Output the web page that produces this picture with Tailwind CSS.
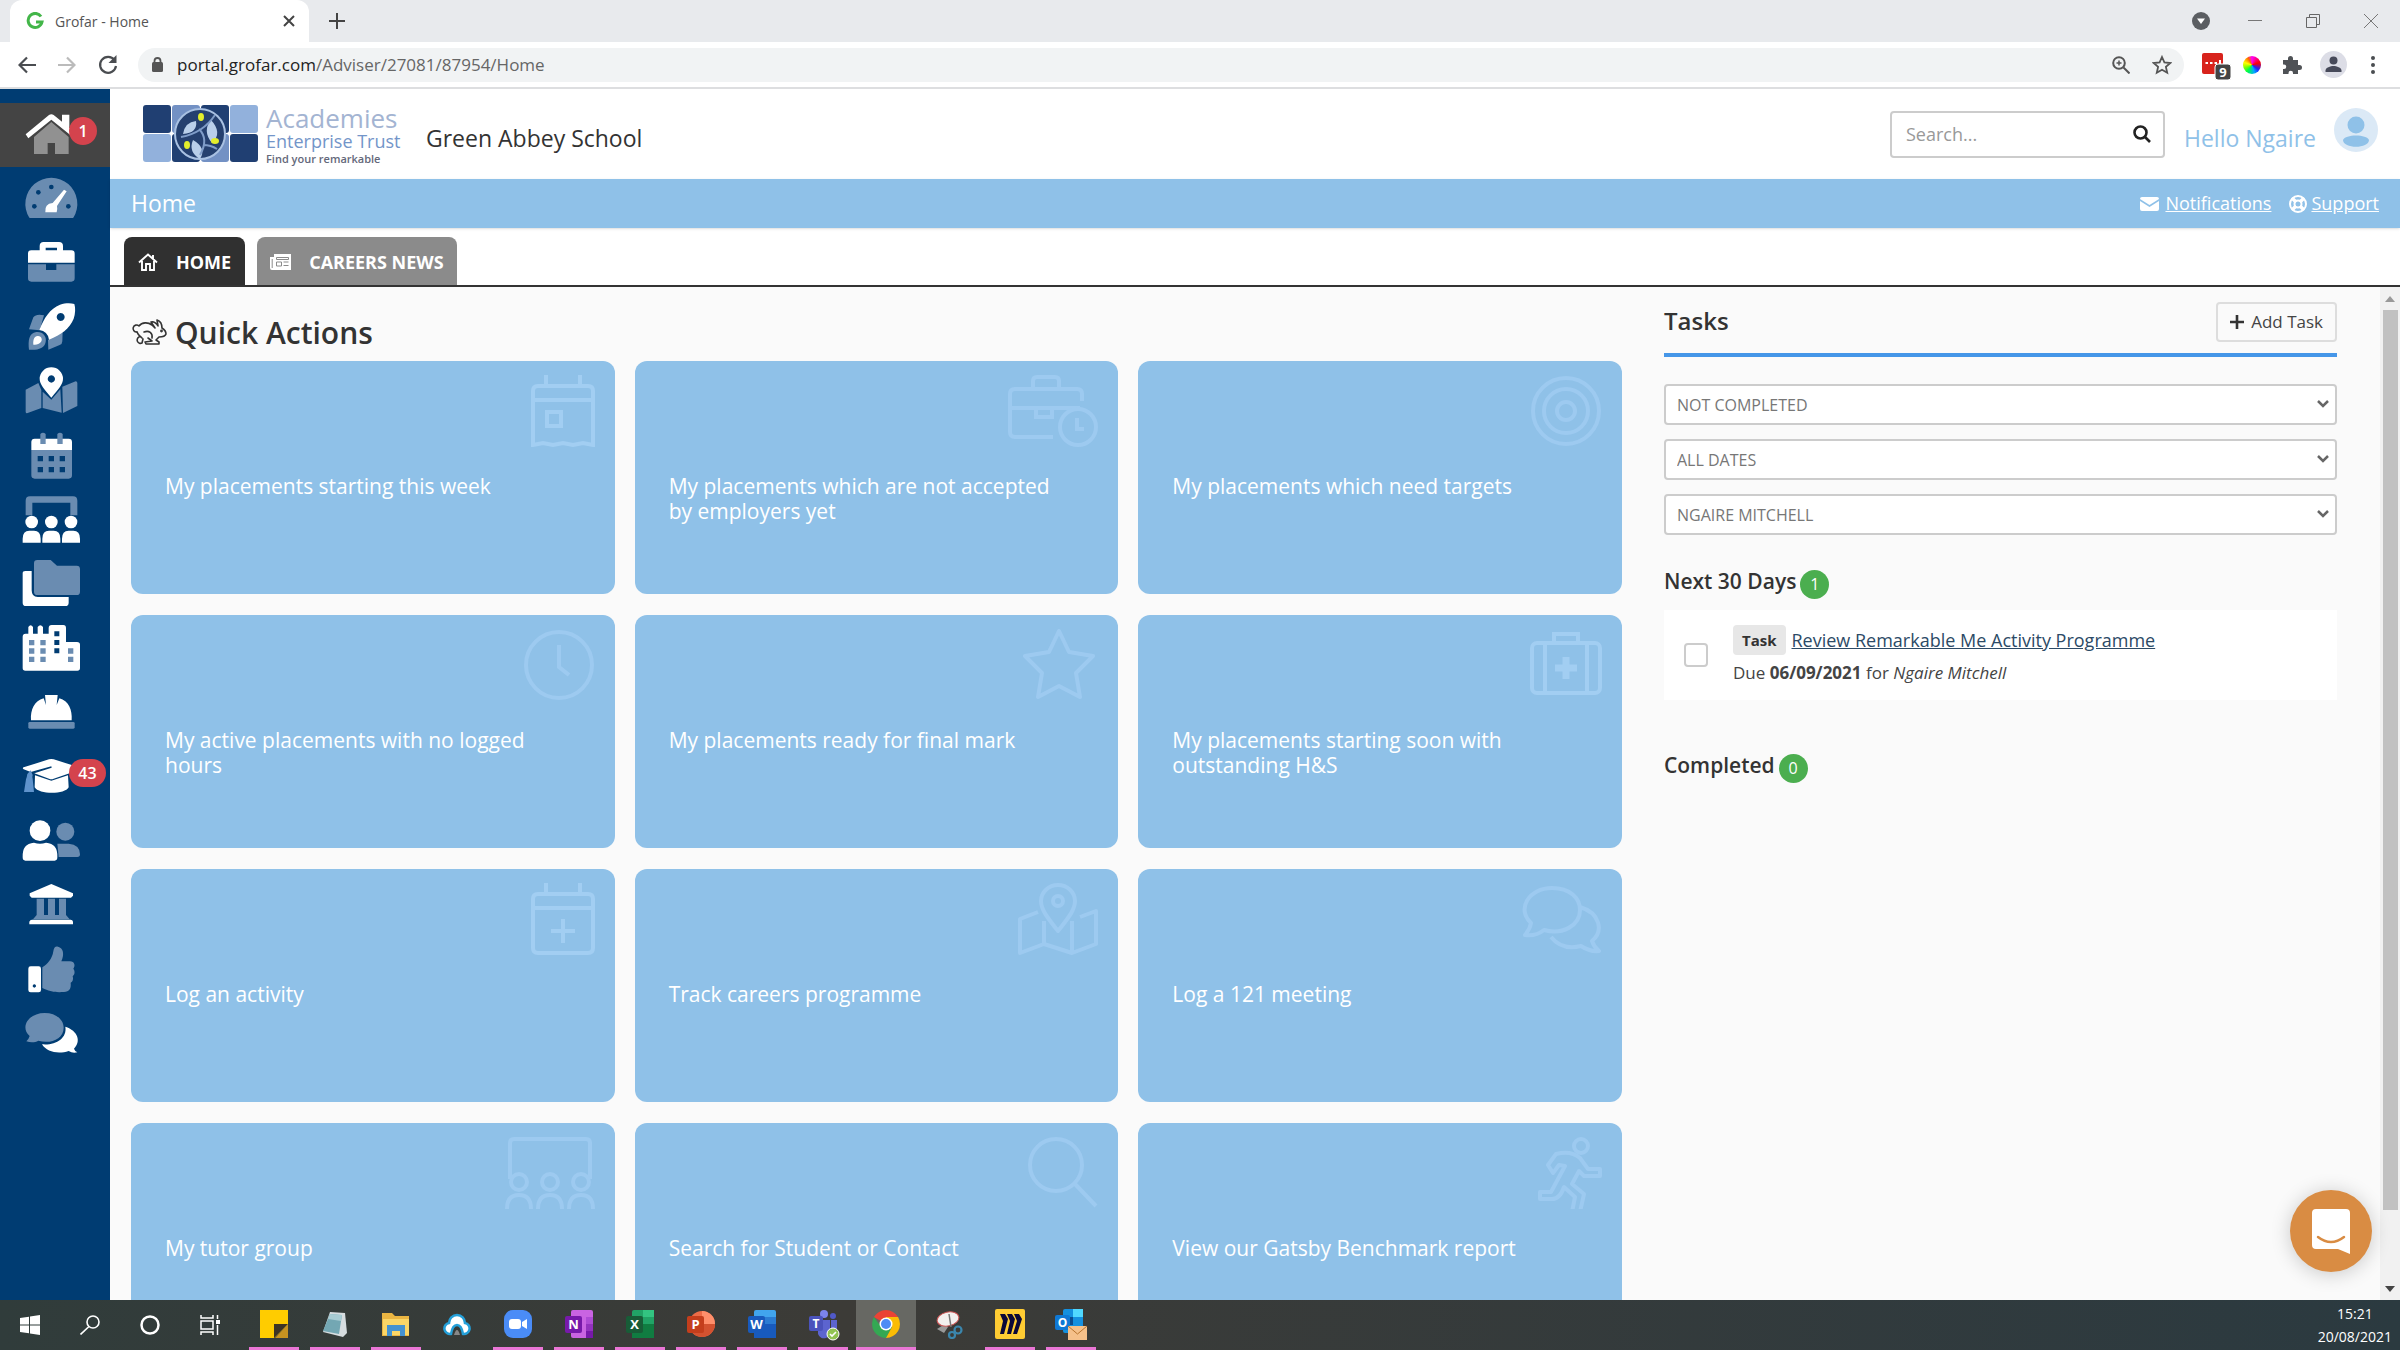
<!DOCTYPE html>
<html lang="en">
<head>
<meta charset="utf-8">
<title>Grofar - Home</title>
<script src="https://cdn.jsdelivr.net/npm/@tailwindcss/browser@4"></script>
</head>
<body class="flex h-screen flex-col overflow-hidden bg-white font-['Open_Sans',sans-serif] text-[#333]">

<!-- Browser chrome -->
<div class="flex h-[42px] shrink-0 items-stretch bg-[#e8eaed] pl-[10px]">
  <div class="flex w-[299px] items-center rounded-t-xl bg-white pr-3 pl-4">
    <svg class="size-[18px]" viewBox="0 0 18 18" fill="none" stroke="#43b649" stroke-width="3"><path d="M15 4.5A7 7 0 1 0 16 10H10"/></svg>
    <span class="ml-[11px] flex-1 text-[14px] text-[#555]">Grofar - Home</span>
    <button aria-label="Close tab" class="size-4"><svg viewBox="0 0 16 16" stroke="#444" stroke-width="2"><path d="M3 3l10 10M13 3L3 13"/></svg></button>
  </div>
  <button aria-label="New tab" class="ml-5 w-4"><svg viewBox="0 0 16 16" stroke="#444" stroke-width="2"><path d="M8 0v16M0 8h16"/></svg></button>
  <div class="ml-auto flex items-center gap-[38px] pr-[22px]">
    <svg class="size-[18px]" viewBox="0 0 18 18"><circle cx="9" cy="9" r="9" fill="#5b5e62"/><path d="M5 6.500h8L9 12z" fill="#fff"/></svg>
    <button aria-label="Minimise" class="w-[14px]"><svg viewBox="0 0 14 14" stroke="#777"><path d="M0 6.500h14"/></svg></button>
    <button aria-label="Restore" class="ml-[6px] w-[14px]"><svg viewBox="0 0 14 14" fill="none" stroke="#666"><path d="M.5 3.500h10v10h-10zM3.500 3.500v-3h10v10h-3"/></svg></button>
    <button aria-label="Close" class="ml-[6px] w-[14px]"><svg viewBox="0 0 14 14" stroke="#777"><path d="M0 0l14 14M14 0L0 14"/></svg></button>
  </div>
</div>
<div class="flex h-[47px] shrink-0 items-center border-b-2 border-[#dddee0] bg-white pr-[25px] pl-[18px]">
  <button aria-label="Back" class="w-[18px]"><svg viewBox="0 0 18 18" fill="none" stroke="#4a4d51" stroke-width="2.200"><path d="M18 9H1.500M9 1.500L1.500 9 9 16.500"/></svg></button>
  <button aria-label="Forward" class="ml-[22px] w-[18px]"><svg viewBox="0 0 18 18" fill="none" stroke="#bbb" stroke-width="2.200"><path d="M0 9h16.500M9 1.500L16.500 9 9 16.500"/></svg></button>
  <button aria-label="Reload" class="ml-[22px] w-[20px]"><svg viewBox="0 0 20 20" fill="none" stroke="#4a4d51" stroke-width="2.200"><path d="M16.500 5A8 8 0 1 0 18 11"/><path d="M18.500 0v8h-8z" fill="#4a4d51" stroke="none"/></svg></button>
  <div class="ml-5 flex h-[34px] flex-1 items-center rounded-full bg-[#f1f3f4] pr-3 pl-[14px]">
    <svg class="w-[11px]" viewBox="0 0 11 15"><rect y="5" width="11" height="10" rx="1.500" fill="#555"/><path d="M2.500 6V4a3 3 0 0 1 6 0v2" fill="none" stroke="#555" stroke-width="1.800"/></svg>
    <span class="ml-[14px] flex-1 text-[17px] text-[#666]"><span class="text-[#222]">portal.grofar.com</span>/Adviser/27081/87954/Home</span>
    <svg class="size-[18px]" viewBox="0 0 18 18" fill="none" stroke="#555" stroke-width="2"><circle cx="7" cy="7" r="5.800"/><path d="M11.500 11.500l6 6"/><path d="M7 4.500v5M4.500 7h5" stroke-width="1.500"/></svg>
    <svg class="ml-[22px] size-[20px]" viewBox="0 0 20 20" fill="none" stroke="#555" stroke-width="1.800"><path d="M10 2l2.400 5.400 5.900.6-4.400 3.900 1.300 5.800L10 14.700l-5.200 3 1.300-5.800L1.700 8l5.900-.6z"/></svg>
  </div>
  <svg class="ml-[18px] h-[30px] w-[29px]" viewBox="0 0 29 30"><rect width="21" height="21" y="3" rx="2" fill="#d8231c"/><path d="M3.500 13h2.500M8 13h2.500M12.500 13H15M18 10v6" stroke="#fff" stroke-width="2"/><rect x="13" y="14" width="16" height="16" rx="3" fill="#444" stroke="#fff"/><text x="21" y="27" text-anchor="middle" font-size="13" font-weight="700" fill="#fff">9</text></svg>
  <span class="ml-3 size-[18px] rounded-full bg-[conic-gradient(#f0f,#f00_20%,#22f_35%,#0af_45%,#0f4_60%,#8f0_70%,#ff0_80%,#f60_92%,#f0f)]"></span>
  <svg class="ml-[21px] size-[20px]" viewBox="0 0 20 20" fill="#4f5256"><path d="M1 5h5V3.500a2.500 2.500 0 0 1 5 0V5h5v5h1.500a2.500 2.500 0 0 1 0 5H16v4h-5v-1a2 2 0 0 0-4.500 0v1H1v-5h1a2 2 0 0 0 0-4.500H1z"/></svg>
  <svg class="ml-[18px] size-[27px]" viewBox="0 0 27 27"><circle cx="13.500" cy="13.500" r="13.500" fill="#dcdde6"/><circle cx="13.500" cy="9.500" r="4" fill="#474a5a"/><path d="M5.500 21v-1.500c0-3 5-4.500 8-4.500s8 1.500 8 4.500V21z" fill="#474a5a"/></svg>
  <svg class="ml-6 h-[18px] w-1" viewBox="0 0 4 18" fill="#4a4d51"><circle cx="2" cy="2" r="2"/><circle cx="2" cy="9" r="2"/><circle cx="2" cy="16" r="2"/></svg>
</div>

<!-- Portal -->
<div class="flex min-h-0 flex-1">
  <nav class="flex w-[110px] shrink-0 flex-col bg-[#003c72] pt-[14px]">
    <a href="#" aria-label="Home" class="relative block h-16 bg-[#444]">
      <svg viewBox="0 39 330 192"><path d="M102 141l52-45 52 45v51H165v-33h-22v33h-41z" fill="#919191"/><path d="M77 133l70-58q7-5 14 0l25 20V74h22v39l24 20-9 12-69-56-69 56z" fill="#fff"/></svg>
      <span class="absolute top-[14px] left-[69px] flex size-7 items-center justify-center rounded-full bg-[#d4434d] text-[16px] font-semibold text-white">1</span>
    </a>
    <a href="#" aria-label="Dashboard" class="block h-16"><svg viewBox="0 231 330 192"><path d="M88 383a78 78 0 1 1 132 0q-2 1-5 1H93q-3 0-5-1z" fill="#6a8cb1"/><g fill="#003c72"><circle cx="154" cy="291" r="7"/><circle cx="115" cy="307" r="7"/><circle cx="103" cy="349" r="7"/><circle cx="205" cy="349" r="7"/></g><path d="M136 367q-3-26 22-28l34-40 8 5-29 44q2 9-1 19z" fill="#fff"/></svg></a>
    <a href="#" aria-label="Placements" class="block h-16"><svg viewBox="0 423 330 192"><path d="M84 518v-27q0-10 10-10h25v-13q0-12 12-12h46q12 0 12 12v13h25q10 0 10 10v27zM137 481h34v-8h-34z" fill="#fff" fill-rule="evenodd"/><path d="M84 523h54v17h31v-17h55v42q0 10-10 10H94q-10 0-10-10z" fill="#6a8cb1"/></svg></a>
    <a href="#" aria-label="Launch" class="block h-16"><svg viewBox="0 615 330 192"><path d="M132 676q-24-5-32 6l-13 36 32 3zM144 750l44-28-1 32q0 8-8 11l-34 14z" fill="#6a8cb1"/><path d="M118 720c14-36 32-64 62-76 16-5 32-5 43-2 4 12 3 30-2 44-12 30-38 48-74 63q-4-26-29-29zM182 669a12 12 0 1 0 .1 0z" fill="#fff" fill-rule="evenodd"/><path d="M87 779c-3-26-1-50 22-53 20-2 32 14 28 30-4 20-24 25-50 23z" fill="#6a8cb1"/><path d="M100 764c-1-16 3-27 14-26 12 1 14 13 8 19-5 6-12 8-22 7z" fill="#fff"/></svg></a>
    <a href="#" aria-label="Map" class="block h-16"><svg viewBox="0 807 330 192"><path d="M77 899l38-20 9 21v54l-43 16q-4 0-4-5zM128 905l26 24 27-31 4 70-57-14zM187 890l40-16q5 0 5 5v69l-43 21z" fill="#6a8cb1"/><path d="M154 923c-22-28-35-40-35-57a35 34 0 0 1 70 0c0 17-13 29-35 57zM154 856a11 11 0 1 0 .1 0z" fill="#fff" fill-rule="evenodd"/></svg></a>
    <a href="#" aria-label="Calendar" class="block h-16"><svg viewBox="0 999 330 192"><path d="M94 1080v-24q0-10 10-10h102q10 0 10 10v24z" fill="#fff"/><path d="M94 1080h122v76q0 10-10 10H104q-10 0-10-10zM113 1098v16h16v-16zm33 0v16h16v-16zm33 0v16h16v-16zM113 1131v16h16v-16zm33 0v16h16v-16zm33 0v16h16v-16z" fill="#6a8cb1" fill-rule="evenodd"/><path d="M121 1032q8-8 16 0v30h-16zM172 1032q8-8 16 0v30h-16z" fill="#6a8cb1"/></svg></a>
    <a href="#" aria-label="Groups" class="block h-16"><svg viewBox="0 1191 330 192"><path d="M77 1276v-44q0-13 13-13h129q13 0 13 13v44h-21v-38H97v38z" fill="#6a8cb1"/><g fill="#fff"><circle cx="95" cy="1296" r="19"/><circle cx="154" cy="1296" r="19"/><circle cx="213" cy="1296" r="19"/><path d="M68 1358v-12q0-24 20-24h14q20 0 20 24v12zM127 1358v-12q0-24 20-24h14q20 0 20 24v12zM186 1358v-12q0-24 20-24h14q20 0 20 24v12z"/></g></svg></a>
    <a href="#" aria-label="Folders" class="block h-16"><svg viewBox="0 -57 330 192"><path d="M68 10q0-7 8-7h19v58q0 20 18 20h93v17q0 10-10 10H78q-10 0-10-10z" fill="#fff"/><path d="M102-20q0-10 10-10h40l19 17h59q10 0 10 10v68q0 10-10 10H112q-10 0-10-10z" fill="#6a8cb1"/></svg></a>
    <a href="#" aria-label="Employers" class="block h-16"><svg viewBox="0 135 330 192"><path d="M68 200q0-9 9-9h8v-20q7-11 14 0v20h14v-20q8-11 16 0v20h17v-17q0-9 9-9h35q8 0 8 9v42h33q9 0 9 8v70q0 8-8 8H76q-8 0-8-8z" fill="#fff"/><path d="M87 210h16v16H87zm34 0h16v16h-16zM87 235h16v16H87zm34 0h16v16h-16zM87 260h16v16H87zm34 0h16v16h-16zM204 235h16v16h-16zm0 25h16v16h-16z" fill="#6a8cb1"/><path d="M163 184h15v15h-15zm0 26h15v15h-15zm0 25h15v15h-15z" fill="#003c72"/></svg></a>
    <a href="#" aria-label="Safety" class="block h-16"><svg viewBox="0 327 330 192"><path d="M93 451c-2-32 10-58 38-66l7 20-3-30h38l-3 30 8-20c28 8 39 34 37 66z" fill="#fff"/><rect x="85" y="456" width="139" height="20" rx="4" fill="#6a8cb1"/></svg></a>
    <a href="#" aria-label="Students" class="relative block h-16">
      <svg viewBox="0 519 330 192"><path d="M71 592l76-24q7-2 14 0l76 24q6 3 0 8l-76 26q-7 3-14 0l-44-16 52-17-1-4-62 17-21-8q-5-4 0-6z" fill="#fff"/><path d="M105 616l49 16 50-16 2 36c-10 22-90 22-102 0z" fill="#fff"/><path d="M82 612l10-11 6 14q-2 6 0 12l4 39H72l6-38q3-8 4-16z" fill="#5f93cc"/></svg>
      <span class="absolute top-[16px] left-[69px] flex h-7 w-[37px] items-center justify-center rounded-full bg-[#d4434d] text-[16px] font-semibold text-white">43</span>
    </a>
    <a href="#" aria-label="Contacts" class="block h-16"><svg viewBox="0 711 330 192"><circle cx="196" cy="785" r="27" fill="#6a8cb1"/><path d="M172 821h34q34 3 34 32 0 8-8 8h-56q-2-24-4-40z" fill="#6a8cb1"/><circle cx="120" cy="782" r="31" fill="#fff"/><path d="M68 862q-2-42 34-44 18 6 36 0 36 2 34 44 0 10-8 10H76q-8 0-8-10z" fill="#fff"/></svg></a>
    <a href="#" aria-label="Institutions" class="block h-16"><svg viewBox="0 903 330 192"><path d="M110 986h22v49h12v-49h21v49h12v-49h21v49l11 13H99l11-13z" fill="#6a8cb1"/><path d="M89 970l65-28 65 28v7l-6 6H95l-6-6zM88 1063v-8q2-6 8-6h116q6 0 7 6v8z" fill="#fff"/></svg></a>
    <a href="#" aria-label="Feedback" class="block h-16"><svg viewBox="0 1095 330 192"><path d="M85 1196q0-7 7-7h24q7 0 7 7v64q0 7-7 7H92q-7 0-7-7zM103 1243a5 5 0 1 0 .1 0z" fill="#fff" fill-rule="evenodd"/><path d="M127 1192c16-10 30-26 33-48 2-14 8-16 14-14 16 4 20 22 10 44h26c14 0 17 14 10 22 6 8 4 18-2 22 3 10 0 17-6 20 2 18-4 27-20 28-30 2-44-2-65-12z" fill="#6a8cb1"/></svg></a>
    <a href="#" aria-label="Messages" class="block h-16"><svg viewBox="0 1287 330 192"><path d="M196 1370c38 12 48 44 26 66q2 7 10 11-14 4-26-4c-30 10-66 4-80-20 40 4 76-18 70-53z" fill="#fff"/><path d="M134 1329c34 0 57 20 57 44 0 34-40 50-76 39-10 6-24 6-36 2q7-6 10-16c-30-26-4-69 45-69z" fill="#6a8cb1"/></svg></a>
  </nav>

  <div class="flex min-w-0 flex-1 flex-col">
    <header class="flex h-[90px] shrink-0 items-center pr-[22px] pl-[33px]">
      <svg class="h-[58px] w-[115px]" viewBox="0 0 115 58"><g fill="#203f72"><rect width="28" height="28" rx="3"/><rect x="58" width="28" height="28" rx="3"/><rect x="29" y="29" width="28" height="28" rx="3"/><rect x="87" y="29" width="28" height="28" rx="3"/></g><g fill="#92b1dc"><rect x="29" width="28" height="28" rx="3" fill="#7391c4"/><rect x="87" width="28" height="28" rx="3"/><rect y="29" width="28" height="28" rx="3"/><rect x="58" y="29" width="28" height="28" rx="3" fill="#7391c4"/></g><circle cx="57" cy="29" r="25" fill="#25406f" stroke="#a9c1e2" stroke-width="2"/><g fill="#b9cfea"><path d="M40 29q2-12 13-13 2 12-13 13zM50 35q14 8 7 19-12-7-7-19zM68 15q12 13 1 23-10-12-1-23z"/></g><path d="M38 32q22-4 34-22M56 24q10 10 1 26M60 40q8 0 14 4" stroke="#7f9cc8" stroke-width="2" fill="none"/><g fill="#e3ee2c"><ellipse cx="58" cy="12" rx="3" ry="4"/><ellipse cx="44" cy="40" rx="3" ry="4"/><ellipse cx="72" cy="36" rx="4" ry="3"/></g></svg>
      <div class="ml-2 w-[140px] pt-1 whitespace-nowrap">
        <div class="text-[26px] leading-[26px] text-[#a3b4d2]">Academies</div>
        <div class="text-[18px] leading-5 text-[#7395c9]">Enterprise Trust</div>
        <div class="text-[11px] leading-4 font-semibold text-[#64687a]">Find your remarkable</div>
      </div>
      <span class="ml-5 pt-2 text-[23px]">Green Abbey School</span>
      <div class="ml-auto flex h-[47px] w-[275px] items-center rounded-[4px] border-2 border-[#ccc] pr-3 pl-[14px]">
        <input type="text" aria-label="Search" placeholder="Search..." class="min-w-0 flex-1 text-[18px] outline-none placeholder:text-[#999]">
        <button aria-label="Search" class="w-[18px]"><svg viewBox="0 0 18 18" fill="none" stroke="#222" stroke-width="2.600"><circle cx="7.500" cy="7.500" r="6"/><path d="M12 12l5 5"/></svg></button>
      </div>
      <a href="#" class="ml-[19px] flex items-center gap-[18px] text-[23px] text-[#8fc1e8]"><span class="pt-2">Hello Ngaire</span>
        <svg class="mb-2 size-[44px]" viewBox="0 0 44 44"><circle cx="22" cy="22" r="22" fill="#dbe9f6"/><circle cx="22" cy="17" r="8.500" fill="#8fc1e8"/><path d="M9 32c2-6 24-6 26 0 0 9-26 9-26 0z" fill="#8fc1e8"/></svg></a>
    </header>
    <div class="flex h-[49px] shrink-0 items-center bg-[#8fc1e8] px-[21px] text-white shadow">
      <h1 class="text-[23px]">Home</h1>
      <a href="#" class="ml-auto flex items-center gap-[6px] text-[18px]"><svg class="h-[14px] w-[19px]" viewBox="0 0 19 14" fill="#fff"><path d="M0 2q0-2 2-2h15q2 0 2 2l-9.500 6zM0 4l9.500 6L19 4v8q0 2-2 2H2q-2 0-2-2z"/></svg><span class="underline">Notifications</span></a>
      <a href="#" class="ml-[18px] flex items-center gap-1 text-[18px]"><svg class="size-[18px]" viewBox="0 0 18 18" fill="none" stroke="#fff"><circle cx="9" cy="9" r="8" stroke-width="2"/><circle cx="9" cy="9" r="3.500" stroke-width="2"/><path d="M3 3l4 4M15 3l-4 4M3 15l4-4M15 15l-4-4" stroke-width="3.500"/></svg><span class="underline">Support</span></a>
    </div>
    <div class="flex h-[59px] shrink-0 items-end gap-3 border-b-2 border-[#333] pl-[14px] text-[18px] font-bold text-white">
      <a href="#" class="flex h-12 items-center gap-[18px] rounded-t-lg bg-[#303030] px-[14px] pt-0.5"><svg class="w-5" viewBox="0 0 20 18" fill="none" stroke="#fff" stroke-width="1.900"><path d="M1 9.500L10 1.500l9 8M4 8v9h4v-6h4v6h4V8M15 6V2"/></svg>HOME</a>
      <a href="#" class="flex h-12 items-center gap-[18px] rounded-t-lg bg-[#8b8b8b] px-[13px] pt-0.5"><svg class="w-[21px]" viewBox="0 0 21 16"><path d="M4 0h17v16H2q-2 0-2-2V3h4z" fill="#fff"/><path d="M6.500 3.500h12v2h-12zM6.500 8h5v4h-5zM13.500 8h5M13.500 11.500h5M2.200 5v9" stroke="#8b8b8b" fill="none"/></svg>CAREERS NEWS</a>
    </div>

    <div class="flex min-h-0 flex-1 bg-[#fafafa]">
      <main class="grid min-w-0 flex-1 grid-cols-[minmax(0,689fr)_minmax(0,311fr)] gap-[42px] overflow-hidden pr-[43px] pl-[21px]">
        <section>
          <h2 class="flex h-[74px] items-center gap-2 pt-4 text-[30px] font-semibold"><svg class="w-9" viewBox="0 0 36 26" fill="none" stroke="#333" stroke-width="1.600" stroke-linejoin="round" stroke-linecap="round"><path d="M6 13a3.500 3.500 0 1 1 2-6c3-4 9-4 13-1l3 3-4-6c3-1 6 2 7 4l-1-6c3 1 5 4 5 8 3 2 4 4 4 6-1 3-4 3-7 3l-3 3 3 2v2H15l-1-2 7-1-4-3"/><path d="M6 13c1 3 3 4 5 6M8 18a3 3 0 1 0 3 6l1-4M13 13c5-2 9 1 8 6"/><circle cx="30.500" cy="12" r=".6" fill="#333"/></svg>Quick Actions</h2>
          <div class="grid grid-cols-3 gap-x-5 gap-y-[21px] text-[21px] leading-[25px] font-medium text-white">
            <a href="#" class="flex h-[233px] flex-col rounded-xl bg-[#8fc1e8] pt-[14px] pr-5 pl-[34px]"><svg class="h-[72px] w-16 self-end" viewBox="0 0 64 72" fill="none" stroke="#a2cef2" stroke-width="4"><path d="M15 0v12M49 0v12M2 70V16q0-5 5-5h50q5 0 5 5v54l-10-2-10 2-10-2-10 2-10-2zM2 25h60M16 37h14v14H16z"/></svg><span class="mt-[27px] mr-5">My placements starting this week</span></a>
            <a href="#" class="flex h-[233px] flex-col rounded-xl bg-[#8fc1e8] pt-[14px] pr-5 pl-[34px]"><svg class="h-[72px] w-[90px] self-end" viewBox="0 0 90 72" fill="none" stroke="#9dcaf0" stroke-width="4"><path d="M25 14V6q0-4 4-4h18q4 0 4 4v8M74 26V19q0-5-5-5H7q-5 0-5 5v38q0 5 5 5h38M2 33h70M28 33v9h16v-9"/><circle cx="70" cy="52" r="18"/><path d="M69 43v11h7"/></svg><span class="mt-[27px] mr-5">My placements which are not accepted by employers yet</span></a>
            <a href="#" class="flex h-[233px] flex-col rounded-xl bg-[#8fc1e8] pt-[14px] pr-5 pl-[34px]"><svg class="size-[72px] self-end" viewBox="0 0 72 72" fill="none" stroke="#9dcaf0" stroke-width="4"><circle cx="36" cy="36" r="33"/><circle cx="36" cy="36" r="22"/><circle cx="36" cy="36" r="9"/></svg><span class="mt-[27px] mr-5">My placements which need targets</span></a>

            <a href="#" class="flex h-[233px] flex-col rounded-xl bg-[#8fc1e8] pt-[14px] pr-5 pl-[34px]"><svg class="size-[72px] self-end" viewBox="0 0 72 72" fill="none" stroke="#9dcaf0" stroke-width="4"><circle cx="36" cy="36" r="33"/><path d="M36 16v22l10 8"/></svg><span class="mt-[27px] mr-5">My active placements with no logged hours</span></a>
            <a href="#" class="flex h-[233px] flex-col rounded-xl bg-[#8fc1e8] pt-[14px] pr-5 pl-[34px]"><svg class="h-[72px] w-[78px] self-end" viewBox="0 0 78 72" fill="none" stroke="#9dcaf0" stroke-width="4" stroke-linejoin="round"><path d="M39 2l10 21 24 4-17 17 4 24-21-11-21 11 4-24L5 27l24-4z"/></svg><span class="mt-[27px] mr-5">My placements ready for final mark</span></a>
            <a href="#" class="flex h-[233px] flex-col rounded-xl bg-[#8fc1e8] pt-[14px] pr-5 pl-[34px]"><svg class="size-[72px] self-end" viewBox="0 0 72 72" fill="none" stroke="#a2cef2" stroke-width="4"><rect x="2" y="14" width="68" height="50" rx="5"/><path d="M24 14V5h24v9M15 14v50M57 14v50"/><path d="M36 28v22M25 39h22" stroke-width="7"/></svg><span class="mt-[27px] mr-5">My placements starting soon with outstanding H&amp;S</span></a>

            <a href="#" class="flex h-[233px] flex-col rounded-xl bg-[#8fc1e8] pt-[14px] pr-5 pl-[34px]"><svg class="h-[72px] w-16 self-end" viewBox="0 0 64 72" fill="none" stroke="#a2cef2" stroke-width="4"><path d="M15 0v12M49 0v12M7 11h50q5 0 5 5v49q0 5-5 5H7q-5 0-5-5V16q0-5 5-5zM2 25h60M32 36v24M20 48h24"/></svg><span class="mt-[27px] mr-5">Log an activity</span></a>
            <a href="#" class="flex h-[233px] flex-col rounded-xl bg-[#8fc1e8] pt-[14px] pr-5 pl-[34px]"><svg class="h-[72px] w-20 self-end" viewBox="0 0 80 72" fill="none" stroke="#9dcaf0" stroke-width="4" stroke-linejoin="round"><path d="M40 48C28 33 23 26 23 18a17 16 0 0 1 34 0c0 8-5 15-17 30zM20 29L2 36v34l24-9 28 9 24-9V28l-16 6M26 38v23M54 38v32"/><circle cx="40" cy="18" r="5"/></svg><span class="mt-[27px] mr-5">Track careers programme</span></a>
            <a href="#" class="flex h-[233px] flex-col rounded-xl bg-[#8fc1e8] pt-[14px] pr-5 pl-[34px]"><svg class="h-[72px] w-20 self-end" viewBox="0 0 80 72" fill="none" stroke="#9dcaf0" stroke-width="4" stroke-linejoin="round"><path d="M30 5c18 0 28 10 28 22 0 16-18 25-36 20-5 4-12 6-19 5q5-6 6-12C-6 26 7 5 30 5zM58 24c20 6 24 24 12 34q2 6 7 10-9 1-18-5c-12 3-22 1-30-9"/></svg><span class="mt-[27px] mr-5">Log a 121 meeting</span></a>

            <a href="#" class="flex h-[233px] flex-col rounded-xl bg-[#8fc1e8] pt-[14px] pr-5 pl-[34px]"><svg class="h-[72px] w-[90px] self-end" viewBox="0 0 90 72" fill="none" stroke="#9dcaf0" stroke-width="4"><path d="M5 42V6q0-4 4-4h72q4 0 4 4v36M2 72q0-14 12-14t12 14M33 72q0-14 12-14t12 14M64 72q0-14 12-14t12 14"/><circle cx="14" cy="45" r="8"/><circle cx="45" cy="45" r="8"/><circle cx="76" cy="45" r="8"/></svg><span class="mt-[27px] mr-5">My tutor group</span></a>
            <a href="#" class="flex h-[233px] flex-col rounded-xl bg-[#8fc1e8] pt-[14px] pr-5 pl-[34px]"><svg class="size-[72px] self-end" viewBox="0 0 72 72" fill="none" stroke="#9dcaf0" stroke-width="4"><circle cx="30" cy="28" r="26"/><path d="M49 47l21 22"/></svg><span class="mt-[27px] mr-5">Search for Student or Contact</span></a>
            <a href="#" class="flex h-[233px] flex-col rounded-xl bg-[#8fc1e8] pt-[14px] pr-5 pl-[34px]"><svg class="h-[72px] w-16 self-end" viewBox="0 0 64 72" fill="none" stroke="#9dcaf0" stroke-width="4" stroke-linejoin="round"><circle cx="43" cy="9" r="7"/><path d="M10 28l8-11q15-4 24 4l8 11h12v7H46l-5-5-7 13 12 10-4 18h-8l3-15-11-10q-4 12-12 12H2v-7h11l14-26-6-1-6 8z"/></svg><span class="mt-[27px] mr-5">View our Gatsby Benchmark report</span></a>
          </div>
        </section>

        <aside>
          <div class="flex h-[70px] items-start justify-between border-b-4 border-[#4596e8] pt-[15px]">
            <h2 class="text-[24px] leading-[38px] font-semibold">Tasks</h2>
            <button class="flex h-10 items-center gap-[7px] rounded-[4px] border-2 border-[#ddd] px-3 text-[17px] text-[#444]"><svg class="w-[14px]" viewBox="0 0 14 14" stroke="#333" stroke-width="2.600"><path d="M7 0v14M0 7h14"/></svg>Add Task</button>
          </div>
          <div class="mt-[27px] flex flex-col gap-[14px] text-[16px] text-[#777]">
            <div class="relative"><select aria-label="Status" class="h-[41px] w-full appearance-none rounded-[4px] border-2 border-[#ccc] bg-white pl-[11px]"><option>NOT COMPLETED</option></select><svg class="pointer-events-none absolute top-4 right-2 w-3" viewBox="0 0 12 8" fill="none" stroke="#666" stroke-width="2.500"><path d="M1 1l5 5 5-5"/></svg></div>
            <div class="relative"><select aria-label="Dates" class="h-[41px] w-full appearance-none rounded-[4px] border-2 border-[#ccc] bg-white pl-[11px]"><option>ALL DATES</option></select><svg class="pointer-events-none absolute top-4 right-2 w-3" viewBox="0 0 12 8" fill="none" stroke="#666" stroke-width="2.500"><path d="M1 1l5 5 5-5"/></svg></div>
            <div class="relative"><select aria-label="Assigned to" class="h-[41px] w-full appearance-none rounded-[4px] border-2 border-[#ccc] bg-white pl-[11px]"><option>NGAIRE MITCHELL</option></select><svg class="pointer-events-none absolute top-4 right-2 w-3" viewBox="0 0 12 8" fill="none" stroke="#666" stroke-width="2.500"><path d="M1 1l5 5 5-5"/></svg></div>
          </div>
          <h3 class="mt-8 flex h-[30px] items-center gap-1 text-[21px] font-semibold">Next 30 Days <span class="mt-1 flex size-[29px] items-center justify-center rounded-full bg-[#4bae4f] text-[16px] font-normal text-white">1</span></h3>
          <div class="mt-[13px] flex h-[90px] items-center bg-white pl-5">
            <input type="checkbox" id="t1" class="size-6 appearance-none rounded-[4px] border-2 border-[#ccc] bg-white">
            <div class="ml-[25px]">
              <div class="flex items-center gap-[6px]"><label for="t1" class="rounded-[4px] bg-[#e7e7e7] px-[9px] text-[15px] leading-[30px] font-bold">Task</label><a href="#" class="text-[18px] text-[#2c4a66] underline">Review Remarkable Me Activity Programme</a></div>
              <p class="mt-[6px] text-[17px] leading-6 text-[#444]">Due <b>06/09/2021</b> for <i>Ngaire Mitchell</i></p>
            </div>
          </div>
          <h3 class="mt-[51px] flex h-[30px] items-center gap-1 text-[21px] font-semibold">Completed <span class="mt-1 flex size-[29px] items-center justify-center rounded-full bg-[#4bae4f] text-[16px] font-normal text-white">0</span></h3>
        </aside>
      </main>
      <div class="flex w-5 shrink-0 flex-col items-center bg-[#f1f1f1]">
        <svg class="my-[8px] h-[7px] w-[10px]" viewBox="0 0 10 7"><path d="M0 7l5-6 5 6z" fill="#999"/></svg>
        <div class="w-[15px] flex-1 bg-[#c1c1c1]"></div>
        <svg class="mt-[76px] mb-[8px] h-[6px] w-[10px]" viewBox="0 0 10 6"><path d="M0 0l5 6 5-6z" fill="#444"/></svg>
      </div>
    </div>
  </div>
</div>

<button aria-label="Open chat" class="fixed right-[28px] bottom-[78px] size-[82px] rounded-full bg-[#d98c43] shadow-[0_2px_20px_rgba(0,0,0,0.2)]"><svg viewBox="0 0 82 82"><path d="M22 23q0-4 4-4h30q4 0 4 4v41l-12-5H26q-4 0-4-4z" fill="#fff"/><path d="M28 47q13 10 26 0" stroke="#d98c43" stroke-width="2.500" fill="none" stroke-linecap="round"/></svg></button>

<!-- Taskbar -->
<footer class="flex h-[50px] shrink-0 items-stretch bg-linear-to-r from-[#303c3b] via-[#3c3b37] via-35% to-[#2b3a40] text-white">
  <button aria-label="Start" class="flex w-15 items-center justify-center"><svg class="w-5" viewBox="0 0 20 20" fill="#fff"><path d="M0 3l9-1.300V9.500H0zM10 1.500L20 0v9.500H10zM0 10.500h9v7.800L0 17zM10 10.500h10V20l-10-1.500z"/></svg></button>
  <button aria-label="Search" class="flex w-15 items-center justify-center"><svg class="w-5" viewBox="0 0 20 20" fill="none" stroke="#fff" stroke-width="1.600"><circle cx="13" cy="7" r="6"/><path d="M9 11.500L.5 19.500"/></svg></button>
  <button aria-label="Cortana" class="flex w-15 items-center justify-center"><svg class="w-5" viewBox="0 0 20 20" fill="none" stroke="#fff" stroke-width="2.500"><circle cx="10" cy="10" r="8.500"/></svg></button>
  <button aria-label="Task view" class="flex w-15 items-center justify-center"><svg class="w-5" viewBox="0 0 20 20" fill="none" stroke="#fff" stroke-width="1.500"><path d="M1 0v3h12V0M1 6h12v8H1zM1 20v-3h12v3M17.500 0v4M17.500 10v10"/><path d="M16 5h4v4h-4z" fill="#fff" stroke="none"/></svg></button>
  <div class="flex gap-[11px] pl-[9px]">
    <button aria-label="Sticky Notes" class="flex w-[50px] items-center justify-center border-b-3 border-[#ea76d6]"><svg class="size-7" viewBox="0 0 28 28"><path d="M0 0h28v14L14 28H0z" fill="#fc0"/><path d="M14 14h14L14 28z" fill="#3d3424"/><path d="M28 14v14H15z" fill="#c79321"/></svg></button>
    <button aria-label="Notepad" class="flex w-[50px] items-center justify-center border-b-3 border-[#ea76d6]"><svg class="size-7" viewBox="0 0 28 28"><path d="M9 2l15 1 2 20-4 4L2 22z" fill="#d7dde0"/><path d="M9 4l12 1-3 19L2 21z" fill="#73a7b3"/><path d="M9 4l12 1-1 6-13-2z" fill="#a8ccd3"/></svg></button>
    <button aria-label="File Explorer" class="flex w-[50px] items-center justify-center border-b-3 border-[#ea76d6]"><svg class="size-7" viewBox="0 0 28 28"><path d="M0 3h10l3 3h14v20H0z" fill="#eab542"/><path d="M1 9h26v16H1z" fill="#fbd667"/><path d="M5 26V15h18v11h-5v-5h-8v5z" fill="#4592d0"/></svg></button>
    <button aria-label="Cloud" class="flex w-[50px] items-center justify-center"><svg class="size-7" viewBox="0 0 28 28"><path d="M8 23a5.500 5.500 0 0 1-2-11 8 8 0 0 1 16 0 5.500 5.500 0 0 1-2 11c-1-6-3-9-6-9s-5 3-6 9z" fill="#fff" stroke="#249fd8" stroke-width="2.500"/><path d="M11 24q3-10 6 0z" fill="#888"/></svg></button>
    <button aria-label="Zoom" class="flex w-[50px] items-center justify-center border-b-3 border-[#ea76d6]"><svg class="size-7" viewBox="0 0 28 28"><rect width="28" height="28" rx="9" fill="#4a8cf7"/><rect x="5" y="9" width="12" height="10" rx="3" fill="#fff"/><path d="M18 12l5-3v10l-5-3z" fill="#fff"/></svg></button>
    <button aria-label="OneNote" class="flex w-[50px] items-center justify-center border-b-3 border-[#ea76d6]"><svg class="size-7" viewBox="0 0 28 28"><rect x="6" width="22" height="28" rx="2" fill="#c964e2"/><path d="M21 7h7v7h-7z" fill="#ae4bd5"/><path d="M21 14h7v7h-7z" fill="#9332bf"/><path d="M21 21h7v7h-7z" fill="#7719aa"/><rect y="6" width="17" height="17" rx="2" fill="#7719aa"/><text x="8.500" y="19" text-anchor="middle" font-size="13" font-weight="700" fill="#fff">N</text></svg></button>
    <button aria-label="Excel" class="flex w-[50px] items-center justify-center border-b-3 border-[#ea76d6]"><svg class="size-7" viewBox="0 0 28 28"><rect x="6" width="22" height="28" rx="2" fill="#21a366"/><path d="M6 14h22v14H6z" fill="#107c41"/><path d="M17 0h11v7H17z" fill="#33c481"/><rect y="6" width="17" height="17" rx="2" fill="#185c37"/><text x="8.500" y="19" text-anchor="middle" font-size="13" font-weight="700" fill="#fff">X</text></svg></button>
    <button aria-label="PowerPoint" class="flex w-[50px] items-center justify-center border-b-3 border-[#ea76d6]"><svg class="size-7" viewBox="0 0 28 28"><circle cx="15" cy="14" r="13" fill="#ed6c47"/><path d="M15 1a13 13 0 0 1 13 13H15z" fill="#ff8f6b"/><path d="M2 14h26a13 13 0 0 1-26 0z" fill="#d35230"/><rect y="6" width="17" height="17" rx="2" fill="#c43e1c"/><text x="8.500" y="19" text-anchor="middle" font-size="13" font-weight="700" fill="#fff">P</text></svg></button>
    <button aria-label="Word" class="flex w-[50px] items-center justify-center border-b-3 border-[#ea76d6]"><svg class="size-7" viewBox="0 0 28 28"><rect x="6" width="22" height="28" rx="2" fill="#41a5ee"/><path d="M6 7h22v7H6z" fill="#2b7cd3"/><path d="M6 14h22v14H6z" fill="#185abd"/><rect y="6" width="17" height="17" rx="2" fill="#185abd"/><text x="8.500" y="19" text-anchor="middle" font-size="13" font-weight="700" fill="#fff">W</text></svg></button>
    <button aria-label="Teams" class="flex w-[50px] items-center justify-center border-b-3 border-[#ea76d6]"><svg class="size-7 overflow-visible" viewBox="0 0 28 28"><circle cx="15" cy="4" r="4" fill="#7b83eb"/><circle cx="24" cy="6" r="3" fill="#5059c9"/><path d="M9 10h12v10a6 6 0 0 1-12 4zM22 10h6v8q-1 4-6 4z" fill="#5c64cf"/><rect y="6" width="14" height="15" rx="2" fill="#4b53bc"/><text x="7" y="18" text-anchor="middle" font-size="12" font-weight="700" fill="#fff">T</text><circle cx="24" cy="24" r="6" fill="#92c353" stroke="#fff"/><path d="M21 24l2 2 4-4" stroke="#fff" stroke-width="1.600" fill="none"/></svg></button>
    <button aria-label="Chrome" class="-mx-[3px] flex w-15 items-center justify-center border-b-3 border-[#ea76d6] bg-[#676863]"><svg class="size-7" viewBox="0 0 28 28"><path d="M14 14L1.900 7A14 14 0 0 1 26.100 7H14z" fill="#ea4335"/><path d="M14 14l-7 0L1.900 7A14 14 0 0 0 14 28l6-11z" fill="#34a853"/><path d="M14 14l6 3-6 11A14 14 0 0 0 26.100 7H14z" fill="#fbbc05"/><circle cx="14" cy="14" r="6.500" fill="#fff"/><circle cx="14" cy="14" r="5" fill="#4c8bf5"/></svg></button>
    <button aria-label="Snipping Tool" class="flex w-[50px] items-center justify-center"><svg class="size-7" viewBox="0 0 28 28"><path d="M2 18l8-5 3 3-4 6z" fill="#999"/><ellipse cx="13" cy="8" rx="11" ry="7" fill="#f3f0ef" stroke="#c55" transform="rotate(-12 13 8)"/><path d="M14 3l2 13" stroke="#777" stroke-width="1.500"/><g fill="none" stroke="#3b86ad" stroke-width="2.200"><circle cx="23" cy="19" r="3.500"/><circle cx="17" cy="24" r="3"/></g></svg></button>
    <button aria-label="Miro" class="flex w-[50px] items-center justify-center border-b-3 border-[#ea76d6]"><svg class="size-[30px]" viewBox="0 0 30 30"><rect width="30" height="30" rx="2" fill="#fc3"/><path d="M5 5h5l3 5-4 15H5l3-13zM12 5h5l3 5-4 15h-4l3-13zM19 5h5l3 5-5 15h-4l4-13z" fill="#0b0838"/></svg></button>
    <button aria-label="Outlook" class="flex w-[50px] items-center justify-center border-b-3 border-[#ea76d6]"><svg class="size-8" viewBox="0 0 32 32"><rect x="8" y="1" width="20" height="24" rx="2" fill="#1490df"/><path d="M18 1h10v8H18z" fill="#50d9ff"/><path d="M8 9h10v8H8z" fill="#0a4c90"/><rect y="7" width="15" height="15" rx="2" fill="#0f78d4"/><text x="7.500" y="19" text-anchor="middle" font-size="12" font-weight="700" fill="#fff">O</text><path d="M13 18h19v14H13z" fill="#f5c08a"/><path d="M13 18l9.500 8 9.500-8" fill="none" stroke="#b8752f"/></svg></button>
  </div>
  <div class="ml-auto flex flex-col items-center justify-center pr-2 text-[14px] leading-[23px]"><span>15:21</span><span>20/08/2021</span></div>
</footer>
</body>
</html>
